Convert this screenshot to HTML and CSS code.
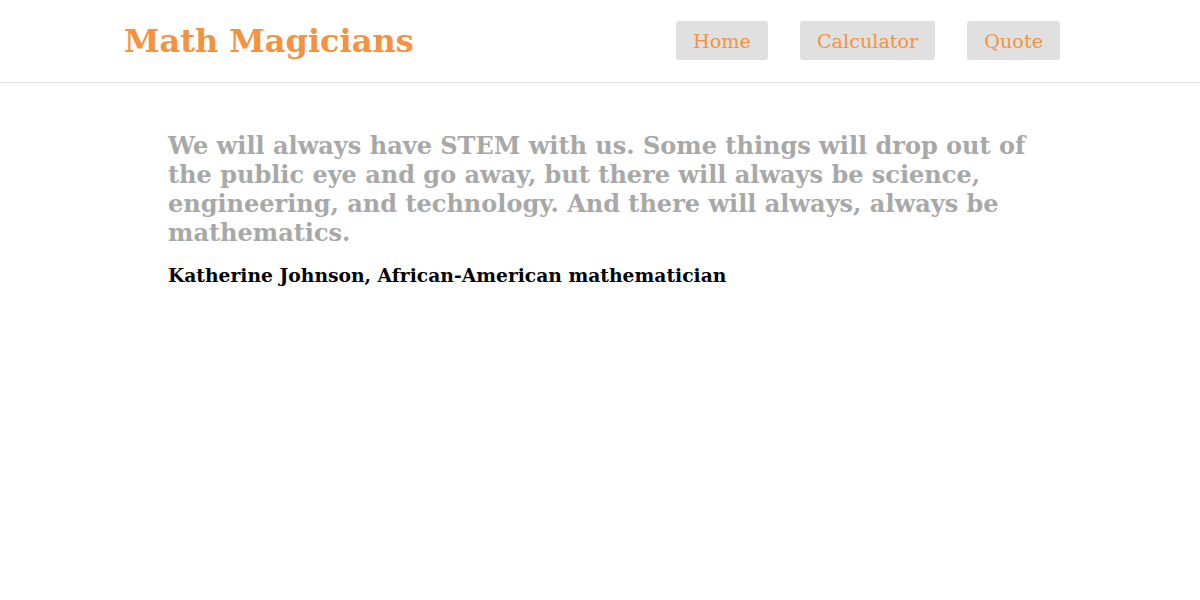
FILE: index.html
```html
<!DOCTYPE html>
<html>
<head>
<meta charset="utf-8">
<link rel="stylesheet" href="styles.css">
</head>
<body>
<header class="header">
  <h1 class="logo">Math Magicians</h1>
  <nav class="nav">
    <a class="nav-link" href="#">Home</a>
    <a class="nav-link" href="#">Calculator</a>
    <a class="nav-link" href="#">Quote</a>
  </nav>
</header>
<main class="quote">
  <p class="quote-text">We will always have STEM with us. Some things will drop out of the public eye and go away, but there will always be science, engineering, and technology. And there will always, always be mathematics.</p>
  <p class="quote-author">Katherine Johnson, African-American mathematician</p>
</main>
</body>
</html>
```
FILE: styles.css
```css
* { box-sizing: border-box; }
body {
  margin: 0;
  font-family: "DejaVu Serif", serif;
  background: #fff;
}
.header {
  display: flex;
  align-items: center;
  justify-content: space-between;
  height: 83px;
  padding: 0 140px 0 124px;
  border-bottom: 1px solid #ddd;
}
.logo {
  margin: 0;
  font-size: 32px;
  font-weight: bold;
  color: #f5923e;
}
.nav {
  display: flex;
  gap: 32px;
  margin-bottom: 2px;
}
.nav-link {
  display: block;
  height: 39px;
  line-height: 37px;
  padding: 2px 17px 0;
  background: #e0e0e0;
  border-radius: 3px;
  color: #f5923e;
  text-decoration: none;
  font-size: 19.2px;
}
.quote {
  padding: 48px 168px 0 168px;
}
.quote-text {
  margin: 0;
  font-size: 24px;
  line-height: 29px;
  font-weight: bold;
  color: #a8a8a8;
}
.quote-author {
  margin: 17px 0 0;
  font-size: 18.72px;
  font-weight: bold;
  color: #000;
}
```
